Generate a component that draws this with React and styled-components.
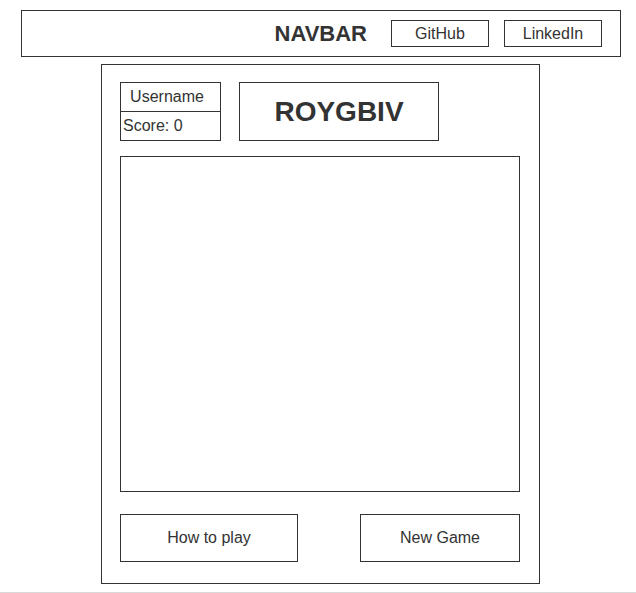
import React from 'react';
import styled, { createGlobalStyle } from 'styled-components';

const GlobalStyle = createGlobalStyle`
  html, body {
    margin: 0;
    padding: 0;
    background: #fff;
  }
  body {
    font-family: "Liberation Sans", Arial, sans-serif;
    color: #333;
  }
  * {
    box-sizing: border-box;
  }
`;

const Page = styled.div`
  min-height: 593px;
  padding-top: 10px;
  border-bottom: 1px solid #d9d9d9;
`;

const Navbar = styled.nav`
  margin-left: 21px;
  width: 600px;
  height: 47px;
  border: 1px solid #333;
  display: flex;
  align-items: center;
  justify-content: flex-end;
  padding-right: 18px;
`;

const Brand = styled.h1`
  margin: 0 24px 0 0;
  font-size: 22px;
  font-weight: bold;
  color: #333;
`;

const NavLink = styled.a`
  width: 98px;
  height: 27px;
  border: 1px solid #333;
  display: flex;
  align-items: center;
  justify-content: center;
  font-size: 16px;
  color: #333;
  text-decoration: none;
  margin-left: ${(p) => (p.$first ? '0' : '15px')};
`;

const Panel = styled.main`
  margin: 7px 0 0 101px;
  width: 439px;
  height: 520px;
  border: 1px solid #333;
  padding: 17px 19px 21px 18px;
  display: flex;
  flex-direction: column;
`;

const TopRow = styled.div`
  display: flex;
  gap: 18px;
`;

const PlayerBox = styled.div`
  width: 101px;
  height: 59px;
  border: 1px solid #333;
  display: grid;
  grid-template-rows: 28px 1px 28px;
`;

const Divider = styled.div`
  background: #333;
`;

const Cell = styled.div`
  display: flex;
  align-items: center;
  justify-content: ${(p) => (p.$center ? 'center' : 'flex-start')};
  padding: ${(p) => (p.$center ? '0 7px 0 0' : '0 0 0 2px')};
  font-size: 16px;
`;

const TitleBox = styled.div`
  width: 200px;
  height: 59px;
  border: 1px solid #333;
  display: flex;
  align-items: center;
  justify-content: center;
  font-size: 28px;
  font-weight: bold;
`;

const Board = styled.div`
  margin-top: 15px;
  width: 400px;
  height: 336px;
  border: 1px solid #333;
`;

const Actions = styled.div`
  margin-top: 22px;
  display: flex;
  justify-content: space-between;
`;

const Button = styled.button`
  width: ${(p) => p.$width}px;
  height: 48px;
  border: 1px solid #333;
  background: #fff;
  font-family: "Liberation Sans", Arial, sans-serif;
  font-size: 16px;
  color: #333;
  padding: 0;
  cursor: pointer;
`;

export default function App() {
  return (
    <>
      <GlobalStyle />
      <Page>
        <Navbar>
          <Brand>NAVBAR</Brand>
          <NavLink $first href="#">GitHub</NavLink>
          <NavLink href="#">LinkedIn</NavLink>
        </Navbar>

        <Panel>
          <TopRow>
            <PlayerBox>
              <Cell $center>Username</Cell>
              <Divider />
              <Cell>Score: 0</Cell>
            </PlayerBox>
            <TitleBox>ROYGBIV</TitleBox>
          </TopRow>

          <Board />

          <Actions>
            <Button $width={178}>How to play</Button>
            <Button $width={160}>New Game</Button>
          </Actions>
        </Panel>
      </Page>
    </>
  );
}
